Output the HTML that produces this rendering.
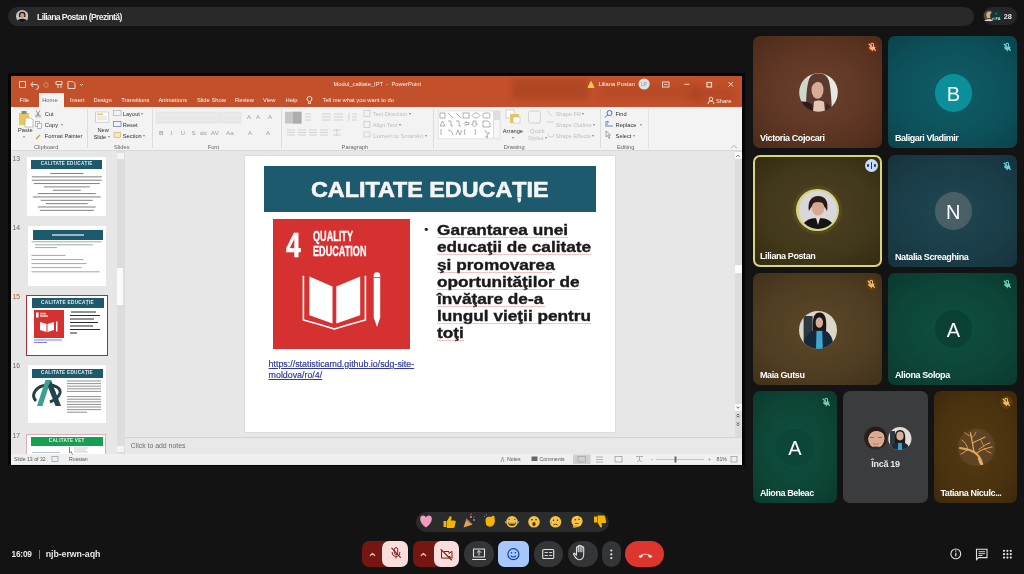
<!DOCTYPE html>
<html><head><meta charset="utf-8">
<style>
*{margin:0;padding:0;box-sizing:border-box}
html,body{width:1024px;height:574px;overflow:hidden;background:#131313;font-family:"Liberation Sans",sans-serif;position:relative}
body{filter:blur(0.35px)}
.a{position:absolute}
.t{position:absolute;white-space:nowrap;line-height:1}
/* top bar */
#pill{left:8px;top:7px;width:965px;height:20px;border-radius:10px;background:#2a2b2d}
#pill2{left:983px;top:7px;width:34px;height:18px;border-radius:9px;background:#232425}
/* ppt */
#frame{left:8px;top:73px;width:737px;height:393px;background:#000}
#ppt{left:10.5px;top:76px;width:731px;height:388px;background:#e6e6e6;overflow:hidden}
#title{left:0;top:0;width:731px;height:30px;background:#c55128}
#ribbon{left:0;top:30px;width:731px;height:44px;background:#f3f3f3;border-bottom:1px solid #d6d6d6}
#thumbs{left:0;top:75px;width:115px;height:303px;background:#e6e6e6}
#slide{left:234.5px;top:79.5px;width:370px;height:276.5px;background:#fff}
/* tiles */
.tile{position:absolute;border-radius:7px;overflow:hidden}
.name{position:absolute;left:7px;bottom:5.2px;color:#fff;font-size:9px;font-weight:bold;white-space:nowrap;line-height:1}
/* toolbar */
.btn{position:absolute;top:541px;height:26px;border-radius:13px;background:#333537}
</style></head><body>
<!-- top bar -->
<div class="a" style="left:7.5px;top:7.3px;width:966px;height:19.2px;border-radius:9.6px;background:#28292b"></div>
<svg class="a" style="left:15.7px;top:10.2px" width="12.4" height="12.4" viewBox="0 0 12.4 12.4"><defs><clipPath id="tpc"><circle cx="6.2" cy="6.2" r="6.2"/></clipPath></defs><g clip-path="url(#tpc)"><rect width="12.4" height="12.4" fill="#c9c0b8"/><path d="M3 7 C2.5 3 4 1.8 6.2 1.8 C8.6 1.8 10 3 9.4 7Z" fill="#2a1c18"/><ellipse cx="6.2" cy="5.6" rx="2.1" ry="2.5" fill="#c89a84"/><path d="M0.5 12.4 C1.5 9.5 3.5 8.8 6.2 8.8 C9 8.8 11 9.5 12 12.4Z" fill="#141414"/></g></svg>
<div class="t" style="left:37px;top:12.9px;font-size:8.6px;font-weight:bold;color:#ececec;letter-spacing:-0.6px">Liliana Postan (Prezintă)</div>
<div class="a" style="left:982.6px;top:6.8px;width:34.4px;height:18px;border-radius:9px;background:#252627"></div>
<svg class="a" style="left:983px;top:8px" width="20" height="16" viewBox="0 0 20 16">
 <circle cx="6.4" cy="7.8" r="5.6" fill="#5a4a3a"/><path d="M3.2 6.5 C3.5 2.5 9.5 2.5 9.6 6.5 L8.8 10 H4Z" fill="#c8b08a"/><path d="M1.2 13 C2.5 10.5 10.5 10.5 11.6 13Z" fill="#e0d8c8"/>
 <circle cx="13.2" cy="8" r="5.6" fill="#103836" stroke="#252627" stroke-width="0.8"/><path d="M12.4 5.8 h1.6" stroke="#8ab" stroke-width="0.7"/><text x="13.2" y="11.6" font-size="3.8" fill="#ddd" text-anchor="middle" font-family="Liberation Sans" font-weight="bold">ri FA</text>
</svg>
<div class="t" style="left:1003.8px;top:13px;font-size:7.2px;font-weight:bold;color:#e8e8e8">28</div>

<!-- ppt -->
<div class="a" style="left:8px;top:73px;width:737px;height:393px;background:#050505"></div>
<div class="a" style="left:10.5px;top:76px;width:731px;height:388.5px;background:#e7e7e7"></div>
<!-- title bar -->
<div class="a" style="left:10.5px;top:76px;width:731px;height:30.5px;background:#c2502a"></div>
<div class="a" style="left:512px;top:79px;width:76px;height:20px;background:rgba(90,25,5,0.16);filter:blur(2.5px)"></div>
<div class="a" style="left:600px;top:85px;width:100px;height:14px;background:rgba(90,25,5,0.1);filter:blur(3px)"></div>
<div class="a" style="left:690px;top:88px;width:45px;height:13px;background:rgba(90,25,5,0.12);filter:blur(3px)"></div>
<div class="a" style="left:39.3px;top:92.8px;width:25.2px;height:14px;background:#f3f3f3"></div>
<div id="ppttxt" style="color:#fff0e8;font-size:5.8px">
<div class="t" style="left:333.5px;top:82.2px">Modul_calitate_IPT&nbsp; - &nbsp;PowerPoint</div>
<div class="t" style="left:598.5px;top:82.2px">Liliana Postan</div>
<div class="t" style="left:19.6px;top:98.3px">File</div>
<div class="t" style="left:42.2px;top:98.3px;color:#6a6a6a">Home</div>
<div class="t" style="left:70px;top:98.3px">Insert</div>
<div class="t" style="left:93.6px;top:98.3px">Design</div>
<div class="t" style="left:121.3px;top:98.3px">Transitions</div>
<div class="t" style="left:158.4px;top:98.3px">Animations</div>
<div class="t" style="left:196.9px;top:98.3px">Slide Show</div>
<div class="t" style="left:235px;top:98.3px">Review</div>
<div class="t" style="left:263px;top:98.3px">View</div>
<div class="t" style="left:285.6px;top:98.3px">Help</div>
<div class="t" style="left:322.5px;top:98.3px">Tell me what you want to do</div>
<div class="t" style="left:716px;top:98.9px">Share</div>
</div>
<svg class="a" style="left:10.5px;top:76px" width="731" height="31" viewBox="0 0 731 31">
 <g fill="none" stroke="#f6d8ca" stroke-width="1">
  <rect x="8.5" y="5.5" width="6" height="6"/>
  <path d="M22 6 L20 8.5 L22 11 M20.5 8.5 H25 A2.5 2.5 0 0 1 25 13.5"/>
  <circle cx="35" cy="9" r="2.2" stroke="#d98a6c"/>
  <path d="M45 5.5 h6 v3 h-6z M47 9 v3 M50 9 v3"/>
  <path d="M57 5.5 h5 l2 2 v5 h-7z"/>
  <path d="M69 8 l1.5 1.5 l1.5 -1.5"/>
  <path d="M577 11.5 L580 5.5 L583 11.5Z" fill="#f2c94c" stroke="#f2c94c"/>
  <rect x="651.5" y="6" width="6.5" height="5"/><path d="M653 8.5 h3.5" stroke-width="0.8"/>
  <path d="M673.5 8.3 h5"/>
  <rect x="696" y="6.5" width="4.5" height="4.5" stroke-width="1.2"/>
  <path d="M717.5 6 l4.5 4.5 M722 6 l-4.5 4.5" stroke-width="1"/>
  <circle cx="298.5" cy="23" r="2.5"/><path d="M297.5 26 v1.5 h2 v-1.5"/>
  <circle cx="700" cy="23" r="1.8"/><path d="M697 28 a3 3 0 0 1 6 0"/>
 </g>
 <circle cx="633.1" cy="8" r="5.6" fill="#dde3ea"/>
 <text x="633.1" y="10" font-size="4.5" fill="#7a8ea0" text-anchor="middle" font-family="Liberation Sans">LP</text>
</svg>
<!-- ribbon -->
<div class="a" style="left:10.5px;top:106.6px;width:731px;height:44px;background:#f3f3f3;border-bottom:1px solid #dadada"></div>
<div style="color:#303030;font-size:5.7px">
 <div class="t" style="left:44.8px;top:112.3px">Cut</div>
 <div class="t" style="left:44.8px;top:123.3px">Copy&nbsp; <span style="font-size:4.2px;vertical-align:1px;color:#888">▾</span></div>
 <div class="t" style="left:44.8px;top:134.3px">Format Painter</div>
 <div class="t" style="left:18px;top:128.3px">Paste</div>
 <div class="t" style="left:22.5px;top:135.3px"><span style="font-size:4.2px;vertical-align:1px;color:#888">▾</span></div>
 <div class="t" style="left:34px;top:145.3px;color:#666">Clipboard</div>
 <div class="t" style="left:97.5px;top:127.6px">New</div>
 <div class="t" style="left:93.5px;top:134.8px">Slide <span style="font-size:4.2px;vertical-align:1px;color:#888">▾</span></div>
 <div class="t" style="left:122.8px;top:111.8px">Layout <span style="font-size:4.2px;vertical-align:1px;color:#888">▾</span></div>
 <div class="t" style="left:122.8px;top:122.8px">Reset</div>
 <div class="t" style="left:122.8px;top:133.8px">Section <span style="font-size:4.2px;vertical-align:1px;color:#888">▾</span></div>
 <div class="t" style="left:114px;top:145.3px;color:#666">Slides</div>
 <div class="t" style="left:207.7px;top:145.3px;color:#666">Font</div>
 <div class="t" style="left:341.6px;top:145.3px;color:#666">Paragraph</div>
 <div class="t" style="left:503.8px;top:145.3px;color:#666">Drawing</div>
 <div class="t" style="left:617px;top:145.3px;color:#666">Editing</div>
 <div class="t" style="left:502.8px;top:128.6px">Arrange</div>
 <div class="t" style="left:511.5px;top:135.8px"><span style="font-size:4.2px;vertical-align:1px;color:#888">▾</span></div>
 <div class="t" style="left:615.6px;top:111.6px">Find</div>
 <div class="t" style="left:615.6px;top:122.6px">Replace&nbsp; <span style="font-size:4.2px;vertical-align:1px;color:#888">▾</span></div>
 <div class="t" style="left:615.6px;top:133.6px">Select <span style="font-size:4.2px;vertical-align:1px;color:#888">▾</span></div>
 <div style="color:#bdbdbd">
  <div class="t" style="left:372.8px;top:111.6px">Text Direction <span style="font-size:4.2px;vertical-align:1px;color:#888">▾</span></div>
  <div class="t" style="left:372.8px;top:122.6px">Align Text <span style="font-size:4.2px;vertical-align:1px;color:#888">▾</span></div>
  <div class="t" style="left:372.8px;top:133.6px">Convert to SmartArt <span style="font-size:4.2px;vertical-align:1px;color:#888">▾</span></div>
  <div class="t" style="left:555.5px;top:111.6px">Shape Fill <span style="font-size:4.2px;vertical-align:1px;color:#888">▾</span></div>
  <div class="t" style="left:555.5px;top:122.6px">Shape Outline <span style="font-size:4.2px;vertical-align:1px;color:#888">▾</span></div>
  <div class="t" style="left:555.5px;top:133.6px">Shape Effects <span style="font-size:4.2px;vertical-align:1px;color:#888">▾</span></div>
  <div class="t" style="left:530px;top:128.6px">Quick</div>
  <div class="t" style="left:528px;top:135.8px">Styles <span style="font-size:4.2px;vertical-align:1px;color:#888">▾</span></div>
 </div>
</div>
<!-- separators -->
<div class="a" style="left:87px;top:109px;width:1px;height:39px;background:#dcdcdc"></div>
<div class="a" style="left:152.2px;top:109px;width:1px;height:39px;background:#dcdcdc"></div>
<div class="a" style="left:281px;top:109px;width:1px;height:39px;background:#dcdcdc"></div>
<div class="a" style="left:433.4px;top:109px;width:1px;height:39px;background:#dcdcdc"></div>
<div class="a" style="left:600.2px;top:109px;width:1px;height:39px;background:#dcdcdc"></div>
<div class="a" style="left:648px;top:109px;width:1px;height:39px;background:#e2e2e2"></div>
<!-- ribbon icons -->
<svg class="a" style="left:0;top:106px" width="742" height="45" viewBox="0 106 742 45">
 <path d="M19 113 h10 v12 h-10z" fill="#e8c65a"/><rect x="21.5" y="111" width="5" height="3" fill="#8a8a8a"/><path d="M25 118 h6 l2 2 v7 h-8z" fill="#fff" stroke="#9a9a9a" stroke-width="0.6"/>
 <path d="M36 110.5 l3 5 M40 110.5 l-3 5" stroke="#7a7a7a" stroke-width="0.8"/><circle cx="36.5" cy="116" r="1" fill="none" stroke="#7a7a7a" stroke-width="0.6"/><circle cx="39.5" cy="116" r="1" fill="none" stroke="#7a7a7a" stroke-width="0.6"/>
 <rect x="35.5" y="121.5" width="4" height="5" fill="none" stroke="#7d93b0" stroke-width="0.6"/><rect x="37.5" y="123.5" width="4" height="5" fill="#fff" stroke="#7d93b0" stroke-width="0.6"/>
 <path d="M36 139 l4 -4" stroke="#c9a040" stroke-width="1.2"/>
 <rect x="95.6" y="112" width="13.2" height="10.2" fill="#fff" stroke="#b8b8b8" stroke-width="0.6"/><rect x="97" y="113.5" width="6" height="1.5" fill="#e8c65a"/><rect x="97" y="116" width="10" height="4.5" fill="#eaeaea"/>
 <rect x="113.5" y="110.5" width="7.5" height="5" fill="none" stroke="#9aa8b8" stroke-width="0.6"/>
 <rect x="113.5" y="121.5" width="7.5" height="5" fill="none" stroke="#5b7da8" stroke-width="0.7"/>
 <rect x="114" y="132.5" width="6.5" height="5" fill="#f4e8c8" stroke="#d0a860" stroke-width="0.6"/>
 <rect x="156" y="112" width="64" height="11" fill="#e9e9e9" stroke="#dedede" stroke-width="0.5"/>
 <rect x="221" y="112" width="20" height="11" fill="#e9e9e9" stroke="#dedede" stroke-width="0.5"/>
 <g fill="#a0a0a0" font-family="Liberation Sans" font-size="6.2">
  <text x="159" y="135" font-weight="bold">B</text><text x="170.5" y="135" font-style="italic">I</text><text x="180.5" y="135">U</text><text x="191.5" y="135">S</text><text x="200" y="135" font-size="4.5">abc</text><text x="211" y="135">AV</text><text x="226" y="135">Aa</text><text x="247" y="119">A</text><text x="256" y="119">A</text><text x="268" y="119">A</text><text x="248" y="135">A</text><text x="266" y="135">A</text>
 </g>
 <rect x="285" y="111.8" width="16.5" height="11.7" fill="#c6c6c6"/><rect x="293" y="111.8" width="8.5" height="11.7" fill="#adadad"/>
 <g stroke="#c4c4c4" stroke-width="0.7" fill="none">
  <path d="M305 114 h6 M305 117 h6 M305 120 h6"/><path d="M322 114 h9 M322 117 h9 M322 120 h9"/><path d="M334 114 h9 M334 117 h9 M334 120 h9"/><path d="M349 113 v8 M352 114 h5 M352 117 h5 M352 120 h5"/>
  <path d="M287 130 h8 M287 132.5 h8 M287 135 h8"/><path d="M298 130 h8 M298 132.5 h8 M298 135 h8"/><path d="M309 130 h8 M309 132.5 h8 M309 135 h8"/><path d="M320 130 h8 M320 132.5 h8 M320 135 h8"/><path d="M333 130 h8 M333 135 h8 M337 129 v7"/>
  <rect x="364" y="110.5" width="6" height="6"/><rect x="364" y="121.5" width="6" height="6"/><path d="M364 132 h6 v5 h-6z"/>
  <rect x="528.5" y="111" width="12" height="12" rx="2"/>
  <path d="M547 111 l5 5 M547 122 h7 M548 134 a3 3 0 1 0 6 0"/>
 </g>
 <rect x="438.2" y="111" width="55.4" height="27.8" fill="#fff" stroke="#d6d6d6" stroke-width="0.6"/>
 <rect x="493.6" y="111" width="6.5" height="27.8" fill="#f6f6f6" stroke="#d6d6d6" stroke-width="0.6"/>
 <rect x="493.6" y="111" width="6.5" height="9" fill="#dedede"/>
 <g stroke="#707070" stroke-width="0.55" fill="none">
  <rect x="440" y="113" width="5" height="5"/><path d="M448 113 l5 5 M456 113 l5 5"/><rect x="463" y="113" width="6" height="5"/><path d="M472 115.5 l2.5 -2.5 h3 l2.5 2.5 l-2.5 2.5 h-3z"/><rect x="483" y="113" width="7" height="5" rx="1.5"/>
  <path d="M440 126 l2.5 -5 l2.5 5z M448 121 h3 v5 h2 M456 121 h3 v5 h2 M464 123.5 l2 -2 v1 h3 v2 h-3 v1z M473 121 h3 v3 h1.5 l-3 3 l-3 -3 h1.5z M483 121 h5 l2 2 v4 h-7z"/>
  <path d="M441 129 v6 M448 130 q4 0 5 5 M456 135 l2 -5 l2 5 l2 -5 M465 129 q-1.5 3 0 6 M475 129 q1.5 3 0 6 M485 130 l1.5 3 h3 l-2.5 2 l1 3 l-3 -2"/>
 </g>
 <rect x="506" y="110" width="8" height="8" fill="#fff" stroke="#aaa" stroke-width="0.5"/><rect x="510" y="114" width="9" height="9" fill="#e8c65a"/><rect x="513" y="117" width="7" height="6" fill="#fff" stroke="#aaa" stroke-width="0.5"/>
 <circle cx="609.5" cy="113" r="2.5" fill="none" stroke="#2b6cb8" stroke-width="0.9"/><path d="M607.5 115 l-2.5 2.5" stroke="#2b6cb8" stroke-width="1"/>
 <path d="M605 122 h4 M608 122 l-1 -1 M605 126 h8 M605 124 h3" stroke="#2b6cb8" stroke-width="0.8"/>
 <path d="M606 131 v6 l1.5 -1.5 l1.5 3 l1 -0.5 l-1.5 -3 h2z" fill="none" stroke="#777" stroke-width="0.6"/>
 <path d="M731 148 l3 -2.5 l3 2.5" fill="none" stroke="#999" stroke-width="0.7"/>
</svg>
<!-- left thumbnail pane -->
<div class="a" style="left:10.5px;top:151px;width:106px;height:303px;background:#e7e7e7"></div>
<div class="a" style="left:116.5px;top:151px;width:8.5px;height:303px;background:#dddddd"></div>
<div class="a" style="left:117.3px;top:153px;width:6.5px;height:6px;background:#f4f4f4"></div>
<div class="a" style="left:117.3px;top:267.6px;width:5.4px;height:37.5px;background:#fbfbfb"></div>
<div class="a" style="left:117.3px;top:446px;width:6.5px;height:6px;background:#f4f4f4"></div>
<div class="a" style="left:125.3px;top:151px;width:616px;height:285.5px;background:#e7e7e7"></div>
<div class="a" style="left:735px;top:151px;width:6.6px;height:286px;background:#dcdcdc"></div>
<div class="a" style="left:734.5px;top:152px;width:7px;height:7px;background:#f8f8f8"></div>
<div class="a" style="left:734.5px;top:265.2px;width:7px;height:7.8px;background:#fcfcfc"></div>
<div class="a" style="left:734.5px;top:404px;width:7px;height:7px;background:#fbfbfb"></div>
<svg class="a" style="left:734px;top:150px" width="8" height="290" viewBox="734 150 8 290"><path d="M736 157 l2 -2 l2 2" fill="none" stroke="#666" stroke-width="0.8"/><path d="M736.5 407 l1.5 1.2 l1.5 -1.2" fill="none" stroke="#555" stroke-width="0.9"/><path d="M736.6 415.3 l1.4 -1.2 l1.4 1.2 M736.6 417.3 l1.4 -1.2 l1.4 1.2 M736.6 422.5 l1.4 1.2 l1.4 -1.2 M736.6 424.5 l1.4 1.2 l1.4 -1.2" fill="none" stroke="#555" stroke-width="0.9"/></svg>
<!-- notes -->
<div class="a" style="left:125.3px;top:437px;width:616px;height:17.5px;background:#e8e8e8;border-top:1px solid #d4d4d4"></div>
<div class="t" style="left:130.7px;top:443.0px;font-size:6.9px;color:#6e6e6e">Click to add notes</div>
<!-- status bar -->
<div class="a" style="left:10.5px;top:454.3px;width:731px;height:10px;background:#f0f0f0"></div>
<div style="color:#555;font-size:5.2px">
 <div class="t" style="left:14px;top:456.8px">Slide 13 of 32</div>
 <div class="t" style="left:69px;top:456.8px">Russian</div>
 <div class="t" style="left:507px;top:456.8px">Notes</div>
 <div class="t" style="left:539.5px;top:456.8px">Comments</div>
 <div class="t" style="left:716.5px;top:456.8px">81%</div>
</div>
<svg class="a" style="left:0;top:454px" width="742" height="11" viewBox="0 454 742 11">
 <rect x="52" y="456.5" width="6" height="5" fill="none" stroke="#888" stroke-width="0.6"/>
 <path d="M501 462 l1.5 -5 l1.5 5" fill="none" stroke="#777" stroke-width="0.6"/>
 <rect x="531.5" y="456.5" width="6" height="4.5" fill="#666"/>
 <rect x="573" y="454.5" width="17.5" height="9.5" fill="#cfcfcf"/>
 <rect x="578" y="456.5" width="7.5" height="5.5" fill="none" stroke="#999" stroke-width="0.6"/>
 <path d="M596 457 h7 M596 459.5 h7 M596 462 h7" stroke="#888" stroke-width="0.6"/>
 <rect x="615" y="456.5" width="7" height="5.5" fill="none" stroke="#888" stroke-width="0.6"/>
 <path d="M636 456.5 h7 M639.5 456.5 v4 M637 462 l2.5 -2 l2.5 2" fill="none" stroke="#888" stroke-width="0.6"/>
 <path d="M651 459.5 h2 M656 459.5 h48 M708 459.5 h3 M709.5 458 v3" stroke="#999" stroke-width="0.5"/>
 <rect x="674.5" y="456.5" width="2" height="6" fill="#666"/>
 <rect x="731" y="456.5" width="6" height="5.5" fill="none" stroke="#888" stroke-width="0.6"/>
</svg>
<!-- slide -->
<div class="a" style="left:245px;top:155.5px;width:369.5px;height:276.5px;background:#fff;box-shadow:0 0 1.5px rgba(0,0,0,0.18)"></div>
<div class="a" style="left:264px;top:165.8px;width:332.4px;height:45.8px;background:#1e5a6e"></div>
<div class="t" style="left:311.3px;top:178.9px;font-size:22px;font-weight:bold;color:#f4f6f6;-webkit-text-stroke:0.6px #f4f6f6;transform:scaleX(1.06);transform-origin:0 0">CALITATE EDUCAȚIE</div>
<div class="a" style="left:273px;top:219.3px;width:137.2px;height:129.4px;background:#d53131"></div>
<div class="t" style="left:286.2px;top:227.6px;font-size:35.7px;font-weight:bold;color:#fff;-webkit-text-stroke:0.6px #fff;transform:scaleX(0.74);transform-origin:0 0;line-height:1">4</div>
<div class="t" style="left:312.6px;top:229.3px;font-size:14.7px;font-weight:bold;color:#fff;-webkit-text-stroke:0.3px #fff;transform:scaleX(0.62);transform-origin:0 0;line-height:14.4px">QUALITY<br>EDUCATION</div>
<svg class="a" style="left:273px;top:219px" width="138" height="130" viewBox="273 219 138 130">
 <path d="M303.4 275.8 V319.9 Q319 324 334.4 329 Q350 324 365.4 319.9 V275.8" fill="none" stroke="#fff" stroke-width="1.6"/>
 <path d="M309.4 276.5 L332.5 286.5 V323.5 L309.4 315.2Z" fill="#fff"/>
 <path d="M336.3 286.5 L360.2 276.5 V315.2 L336.3 323.5Z" fill="#fff"/>
 <path d="M373.7 275.5 A3.25 3.25 0 0 1 380.2 275.5 V317.5 L377 327.1 L373.7 317.5Z" fill="#fff"/>
 <path d="M373.7 277.6 H380.2" stroke="#d53131" stroke-width="0.9"/>
</svg>
<div class="t" style="left:424.2px;top:224px;font-size:11.5px;font-weight:bold;color:#222">•</div>
<div class="a" style="left:437.3px;top:222.2px;font-size:14px;font-weight:bold;color:#1a1a1a;-webkit-text-stroke:0.35px #1a1a1a;line-height:17.2px;white-space:nowrap;transform:scaleX(1.23);transform-origin:0 0">Garantarea unei<br>educaţii de calitate<br>şi promovarea<br>oportunităţilor de<br>învăţare de-a<br>lungul vieţii pentru<br>toţi</div>
<div class="a" style="left:437.3px;top:237.1px;width:131px;height:0.8px;background:rgba(220,90,90,0.35)"></div>
<div class="a" style="left:437.3px;top:254.3px;width:154px;height:0.8px;background:rgba(220,90,90,0.35)"></div>
<div class="a" style="left:437.3px;top:271.5px;width:115px;height:0.8px;background:rgba(220,90,90,0.35)"></div>
<div class="a" style="left:437.3px;top:288.7px;width:143px;height:0.8px;background:rgba(220,90,90,0.35)"></div>
<div class="a" style="left:437.3px;top:305.9px;width:108px;height:0.8px;background:rgba(220,90,90,0.35)"></div>
<div class="a" style="left:437.3px;top:323.1px;width:154px;height:0.8px;background:rgba(220,90,90,0.35)"></div>
<div class="a" style="left:437.3px;top:340.3px;width:27px;height:0.8px;background:rgba(220,90,90,0.35)"></div>
<div class="a" style="left:268.6px;top:359px;font-size:8.85px;color:#2f3aa6;-webkit-text-stroke:0.2px #2f3aa6;line-height:10.9px;white-space:nowrap;text-decoration:underline">https://statisticamd.github.io/sdg-site-<br>moldova/ro/4/</div>

<!-- thumbnails -->
<div style="color:#6a6a6a;font-size:6.8px">
 <div class="t" style="left:12.5px;top:155.5px">13</div>
 <div class="t" style="left:12.5px;top:224.8px">14</div>
 <div class="t" style="left:12.5px;top:294.1px;color:#c65a36">15</div>
 <div class="t" style="left:12.5px;top:363.4px">16</div>
 <div class="t" style="left:12.5px;top:432.7px">17</div>
</div>
<!-- t13 -->
<div class="a" style="left:27.4px;top:157px;width:78.8px;height:59.3px;background:#fff"></div>
<div class="a" style="left:31px;top:159.5px;width:71.4px;height:9.5px;background:#1e5a6e"></div>
<div class="t" style="left:31px;width:71.4px;top:161.8px;font-size:4.6px;font-weight:bold;color:#dfe9ec;text-align:center;letter-spacing:0.3px">CALITATE EDUCAȚIE</div>
<svg class="a" style="left:27px;top:157px" width="80" height="60" viewBox="27 157 80 60"><path d="M50.3 173.50 h33M31.8 176.85 h70M31.8 180.20 h70M33.8 183.55 h66M43.8 186.90 h46M52.8 190.25 h28M37.8 193.60 h58M32.8 196.95 h68M40.8 200.30 h52M45.8 203.65 h42M37.8 207.00 h58M39.8 210.35 h54" stroke="#2a2a2a" stroke-width="0.85" opacity="0.7"/></svg>
<!-- t14 -->
<div class="a" style="left:27.6px;top:226.3px;width:78.5px;height:59.3px;background:#fff"></div>
<div class="a" style="left:33px;top:230px;width:70px;height:10px;background:#1e5a6e"></div>
<div class="a" style="left:52px;top:234.3px;width:32px;height:1.4px;background:#9ab8c2"></div>
<svg class="a" style="left:27px;top:226px" width="80" height="60" viewBox="27 226 80 60"><path d="M31.5 241.8 h70M35 244.8 h58M35 247.6 h22M31.5 255.4 h34M31.5 259.6 h52M31.5 263.6 h55M31.5 267.6 h50M31.5 271.8 h68" stroke="#6a6a6a" stroke-width="0.8" opacity="0.75"/></svg>
<!-- t15 -->
<div class="a" style="left:26px;top:294.6px;width:81.6px;height:61px;border:1px solid #a03434;background:#fff"></div>
<div class="a" style="left:31.5px;top:298px;width:72px;height:9.8px;background:#1e5a6e"></div>
<div class="t" style="left:31.5px;width:72px;top:300.5px;font-size:4.7px;font-weight:bold;color:#e6eef0;text-align:center;letter-spacing:0.3px">CALITATE EDUCAȚIE</div>
<div class="a" style="left:33.5px;top:309.6px;width:30px;height:28.2px;background:#d53131"></div>
<svg class="a" style="left:33px;top:309px" width="31" height="29" viewBox="33 309 31 29"><rect x="36" y="312.5" width="2.6" height="5" fill="#fff"/><rect x="40" y="312.8" width="6" height="1.6" fill="#f6c8c8"/><rect x="40" y="315.2" width="8" height="1.6" fill="#f6c8c8"/><path d="M40 322 L46.5 324 V332 L40 330Z M47.5 324 L54 322 V330 L47.5 332Z" fill="#fff"/><rect x="56" y="321.5" width="1.5" height="10" fill="#fff"/></svg>
<svg class="a" style="left:26px;top:294px" width="82" height="62" viewBox="26 294 82 62"><g stroke="#2a2a2a" stroke-width="1.1">
<path d="M71 312 h25 M70 315.5 h30 M70 319 h24 M70 322.5 h28 M70 326 h23 M70 329.5 h30 M70 333 h7"/></g>
<path d="M34 340 h28 M34 342.5 h13" stroke="#5a5adf" stroke-width="0.8"/></svg>
<!-- t16 -->
<div class="a" style="left:27.6px;top:365px;width:78.4px;height:58.4px;background:#fff"></div>
<div class="a" style="left:31.5px;top:368.5px;width:71px;height:9.5px;background:#1e5a6e"></div>
<div class="t" style="left:31.5px;width:71px;top:370.8px;font-size:4.6px;font-weight:bold;color:#e6eef0;text-align:center;letter-spacing:0.3px">CALITATE EDUCAȚIE</div>
<svg class="a" style="left:27px;top:365px" width="80" height="60" viewBox="27 365 80 60">
<path d="M36 401 C30 395 36 386 47 385 C55 384.5 61 388 60 393 C59 397 55 400 50 402" fill="none" stroke="#253d44" stroke-width="3"/>
<path d="M37 406 L45.5 380 L51 380 L46 395 L42.5 406Z" fill="#3aa092"/><path d="M51 380 L61 406 L55.5 406 L48 387Z" fill="#22454c"/>
<path d="M67 381.0 h34M67 383.6 h34M67 386.2 h34M67 388.8 h34M67 391.4 h34M67 396.6 h34M67 399.2 h34M67 401.8 h34M67 404.4 h34M67 407.0 h34M67 409.6 h34M67 412.2 h20" stroke="#666" stroke-width="0.9" opacity="0.8"/></svg>
<!-- t17 -->
<div class="a" style="left:26.4px;top:434.2px;width:80px;height:20px;background:#fff;border:0.8px solid #d9b0b4;border-bottom:none"></div>
<div class="a" style="left:31px;top:436.6px;width:71.5px;height:9.6px;background:#14a050"></div>
<div class="t" style="left:31px;width:71.5px;top:439px;font-size:4.6px;font-weight:bold;color:#e6f4ea;text-align:center;letter-spacing:0.3px">CALITATE VET</div>
<div class="a" style="left:32px;top:451.5px;width:28px;height:1.2px;background:#b8c8dc"></div>
<svg class="a" style="left:60px;top:446px" width="30" height="9" viewBox="60 446 30 9"><path d="M69.5 447 v6 l1.5 -1.5 l1.5 3" fill="none" stroke="#555" stroke-width="0.7"/><g stroke="#999" stroke-width="0.5"><path d="M74 448 h14 M74 450 h12 M74 452 h14"/></g></svg>

<!-- tiles -->
<div class="tile" style="left:753px;top:36px;width:129px;height:112px;background:radial-gradient(ellipse 75% 70% at 50% 50%,#6c412c 0%,#5c3522 60%,#4a2a1a 100%)">
  <svg class="a" style="left:45.5px;top:37px" width="39" height="39" viewBox="0 0 39 39"><defs><clipPath id="c1"><circle cx="19.5" cy="19.5" r="19.3"/></clipPath><filter id="bl1" x="-10%" y="-10%" width="120%" height="120%"><feGaussianBlur stdDeviation="0.7"/></filter></defs><g clip-path="url(#c1)"><g filter="url(#bl1)"><rect width="39" height="39" fill="#e6e9e2"/><rect x="0" y="0" width="9" height="30" fill="#cfd8cc"/><path d="M7 39 C7 26 7.5 14 10 6 C12 1 16 0 19.5 0.5 C24 0.5 28 2 30 8 C32 16 32.5 28 33 39Z" fill="#5b3b2e"/><ellipse cx="18.5" cy="17" rx="6" ry="8.8" fill="#d7ab98"/><path d="M12 14 C13 7 17 5 20 5 C24 5 26 8 26 14 C24 10 22 9 19 9 C16 9 14 11 12 14Z" fill="#5b3b2e"/><path d="M0 39 V29 C5 28 9 29 13 31 L14.5 39Z" fill="#2a1d1c"/><path d="M14 39 L15 28.5 C18 27 22 27 25 29 L26 39Z" fill="#e4c6b6"/><path d="M26 39 L27 30 C30 31 32 33 33 39Z" fill="#3c2620"/></g></g></svg>
  <div class="a" style="left:112px;top:4.5px;width:13.5px;height:13.5px;border-radius:50%;background:#6e2b14"></div>
  <svg class="a" style="left:113.5px;top:6px" width="10.5" height="10.5" viewBox="0 0 24 24"><path d="M12 3a3 3 0 0 0-3 3v6a3 3 0 0 0 6 0V6a3 3 0 0 0-3-3z M6 11a6 6 0 0 0 12 0 M12 17v4" stroke="#f2b99a" stroke-width="2.4" fill="none"/><path d="M4 4 L20 20" stroke="#f2b99a" stroke-width="2.6"/></svg>
  <div class="name" style="letter-spacing:-0.4px">Victoria Cojocari</div>
</div>
<div class="tile" style="left:888px;top:36px;width:129px;height:112px;background:radial-gradient(ellipse 75% 70% at 50% 50%,#0f5d66 0%,#0d515a 60%,#0a424b 100%)">
  <div class="a" style="left:46.5px;top:38px;width:37.6px;height:37.6px;border-radius:50%;background:#0b8f9a;color:#fff;font-size:20px;line-height:40px;text-align:center">B</div>
  <svg class="a" style="left:113.5px;top:5.5px" width="10.5" height="10.5" viewBox="0 0 24 24"><path d="M12 3a3 3 0 0 0-3 3v6a3 3 0 0 0 6 0V6a3 3 0 0 0-3-3z M6 11a6 6 0 0 0 12 0 M12 17v4" stroke="#6fd3dc" stroke-width="2.4" fill="none"/><path d="M4 4 L20 20" stroke="#6fd3dc" stroke-width="2.6"/></svg>
  <div class="name" style="letter-spacing:-0.45px">Baligari Vladimir</div>
</div>
<div class="tile" style="left:753px;top:155px;width:129px;height:112px;background:radial-gradient(ellipse 75% 70% at 50% 50%,#4d4222 0%,#413719 60%,#332b12 100%);border:2.2px solid #d9d47e">
  <div class="a" style="left:38.2px;top:28.6px;width:48.8px;height:48.8px;border-radius:50%;background:#544a1e"></div>
  <div class="a" style="left:41.3px;top:31.7px;width:42.6px;height:42.6px;border-radius:50%;background:#d6d488"></div>
  <svg class="a" style="left:43.6px;top:34px" width="38" height="38" viewBox="0 0 38 38"><defs><clipPath id="c3"><circle cx="19" cy="19" r="19"/></clipPath></defs><g clip-path="url(#c3)"><rect width="38" height="38" fill="#d9d7da"/><path d="M10 20 C8 10 13 5 19 5 C26 5 30 10 28 20 C26 16 24 13 19 13 C14 13 12 16 10 20Z" fill="#2a1c18"/><ellipse cx="19" cy="17" rx="6.3" ry="7.5" fill="#d6a890"/><path d="M10 20 C9 12 13 8 19 8 C25 8 29 12 28 20 C27 14 24 11 19 11 C14 11 11 14 10 20Z" fill="#2a1c18"/><path d="M2 38 C4 30 10 27 19 27 C28 27 34 30 36 38Z" fill="#161314"/><path d="M17 27 L19 34 L21 27Z" fill="#e8e0dc"/></g></svg>
  <div class="a" style="left:109.8px;top:1.8px;width:13.4px;height:13.4px;border-radius:50%;background:#c8dcf8"></div>
  <div class="a" style="left:112.1px;top:6.8px;width:1.9px;height:3.4px;background:#0a3a8a;border-radius:1px"></div>
  <div class="a" style="left:115.6px;top:5px;width:1.9px;height:7px;background:#0a3a8a;border-radius:1px"></div>
  <div class="a" style="left:119.1px;top:6.8px;width:1.9px;height:3.4px;background:#0a3a8a;border-radius:1px"></div>
  <div class="name" style="left:5px;bottom:4.5px;letter-spacing:-0.4px">Liliana Postan</div>
</div>
<div class="tile" style="left:888px;top:155px;width:129px;height:112px;background:radial-gradient(ellipse 75% 70% at 50% 50%,#1f4753 0%,#1a3d48 60%,#15313b 100%)">
  <div class="a" style="left:46.5px;top:37px;width:37.6px;height:37.6px;border-radius:50%;background:#4a5e66;color:#fff;font-size:20px;line-height:40px;text-align:center">N</div>
  <svg class="a" style="left:113.5px;top:5.5px" width="10.5" height="10.5" viewBox="0 0 24 24"><path d="M12 3a3 3 0 0 0-3 3v6a3 3 0 0 0 6 0V6a3 3 0 0 0-3-3z M6 11a6 6 0 0 0 12 0 M12 17v4" stroke="#6fd3dc" stroke-width="2.4" fill="none"/><path d="M4 4 L20 20" stroke="#6fd3dc" stroke-width="2.6"/></svg>
  <div class="name" style="letter-spacing:-0.4px">Natalia Screaghina</div>
</div>
<div class="tile" style="left:753px;top:273px;width:129px;height:112px;background:radial-gradient(ellipse 75% 70% at 50% 50%,#5c4829 0%,#4f3d22 60%,#3e3019 100%)">
  <svg class="a" style="left:46px;top:38px" width="38" height="38" viewBox="0 0 38 38"><defs><clipPath id="c5"><circle cx="19" cy="19" r="19"/></clipPath></defs><g clip-path="url(#c5)"><rect width="38" height="38" fill="#ddd6c8"/><path d="M4.6 5 h9 v26 h-9z" fill="#2c3a40"/><path d="M14 20 C13 7 15 1.6 20.5 1.6 C26 1.6 28 7 27 20Z" fill="#1c1616"/><ellipse cx="20.3" cy="11.5" rx="3.7" ry="5.3" fill="#d6ac94"/><path d="M15.5 9 C16 4 18 3.5 20.5 3.5 C23 3.5 25 4 25.5 9 C24 6.5 22 6 20.5 6 C19 6 17 6.5 15.5 9Z" fill="#1c1616"/><path d="M4 38 C5 25 10 18.5 20 18.5 C30 18.5 34 25 35 38Z" fill="#17283a"/><path d="M17.5 20 L23.2 20 L23.8 38 L17 38Z" fill="#3fa6d0"/></g></svg>
  <div class="a" style="left:112px;top:5px;width:13px;height:13px;border-radius:50%;background:#5a3a10"></div>
  <svg class="a" style="left:113.3px;top:6.3px" width="10.5" height="10.5" viewBox="0 0 24 24"><path d="M12 3a3 3 0 0 0-3 3v6a3 3 0 0 0 6 0V6a3 3 0 0 0-3-3z M6 11a6 6 0 0 0 12 0 M12 17v4" stroke="#efc070" stroke-width="2.4" fill="none"/><path d="M4 4 L20 20" stroke="#efc070" stroke-width="2.6"/></svg>
  <div class="name" style="letter-spacing:-0.4px">Maia Gutsu</div>
</div>
<div class="tile" style="left:888px;top:273px;width:129px;height:112px;background:radial-gradient(ellipse 75% 70% at 50% 50%,#0f5041 0%,#0d4538 60%,#0a382d 100%)">
  <div class="a" style="left:46.5px;top:37px;width:37.6px;height:37.6px;border-radius:50%;background:#0a4134;color:#fff;font-size:20px;line-height:40px;text-align:center">A</div>
  <svg class="a" style="left:113.5px;top:5.5px" width="10.5" height="10.5" viewBox="0 0 24 24"><path d="M12 3a3 3 0 0 0-3 3v6a3 3 0 0 0 6 0V6a3 3 0 0 0-3-3z M6 11a6 6 0 0 0 12 0 M12 17v4" stroke="#73d3b0" stroke-width="2.4" fill="none"/><path d="M4 4 L20 20" stroke="#73d3b0" stroke-width="2.6"/></svg>
  <div class="name" style="letter-spacing:-0.4px">Aliona Solopa</div>
</div>
<div class="tile" style="left:753px;top:391px;width:84px;height:112px;background:radial-gradient(ellipse 75% 70% at 50% 50%,#0f5040 0%,#0d4536 60%,#0a382c 100%)">
  <div class="a" style="left:23.4px;top:37.9px;width:37.2px;height:37.2px;border-radius:50%;background:#0b4638;color:#fff;font-size:20px;line-height:39.6px;text-align:center">A</div>
  <svg class="a" style="left:67.8px;top:5.6px" width="10.5" height="10.5" viewBox="0 0 24 24"><path d="M12 3a3 3 0 0 0-3 3v6a3 3 0 0 0 6 0V6a3 3 0 0 0-3-3z M6 11a6 6 0 0 0 12 0 M12 17v4" stroke="#73d3b0" stroke-width="2.4" fill="none"/><path d="M4 4 L20 20" stroke="#73d3b0" stroke-width="2.6"/></svg>
  <div class="name" style="letter-spacing:-0.4px">Aliona Beleac</div>
</div>
<div class="tile" style="left:843px;top:391px;width:85px;height:112px;background:#3b3c3e">
  <svg class="a" style="left:20.6px;top:34.5px" width="48" height="24" viewBox="0 0 48 24"><defs><clipPath id="c8a"><circle cx="11.6" cy="12" r="11.6"/></clipPath><clipPath id="c8b"><circle cx="35.9" cy="12.6" r="11.6"/></clipPath></defs><g clip-path="url(#c8a)"><rect width="24" height="24" fill="#2e2220"/><ellipse cx="12.3" cy="12.5" rx="8.2" ry="9.5" fill="#d9aa92"/><path d="M2 16 C1 4 7 1 12 1 C18 1 22 4 22 12 C20 7 17 5 12 5 C7 5 4 9 3.5 16Z" fill="#2a1a16"/><path d="M6 11.5 h4 M14 11.5 h4" stroke="#9a6a50" stroke-width="1.1"/><path d="M9 17.5 q3 1.5 6 0" stroke="#b07a66" stroke-width="0.9" fill="none"/><path d="M3 24 C6 21 9 20.5 12 20.5 C15 20.5 18 21 21 24Z" fill="#2a2c38"/></g><g clip-path="url(#c8b)"><rect x="24" width="24" height="25" fill="#e2ddd6"/><rect x="26" y="5" width="5" height="20" fill="#2c3a40"/><path d="M31 17 C30 7 32 4 36 4 C40 4 42 7 41 17Z" fill="#1e1818"/><ellipse cx="36" cy="10" rx="3.6" ry="4.4" fill="#d8ae96"/><path d="M26 25 C27 18 31 16 36 16 C41 16 45 18 46 25Z" fill="#18293a"/><path d="M34.2 17 L37.8 17 L38.3 25 L33.7 25Z" fill="#3aa0c8"/></g></svg>
  <div class="t" style="left:0;width:85px;top:68.6px;text-align:center;color:#e8e8e8;font-size:9px;font-weight:bold;letter-spacing:-0.3px">Încă 19</div>
</div>
<div class="tile" style="left:934px;top:391px;width:83px;height:112px;background:radial-gradient(ellipse 75% 70% at 50% 50%,#553a12 0%,#4a320f 60%,#3c280b 100%)">
  <svg class="a" style="left:22.5px;top:37.3px" width="39" height="39" viewBox="0 0 39 39"><circle cx="19.5" cy="19.5" r="18.8" fill="#5e4424"/>
<g stroke="#d9a55a" fill="none" stroke-linecap="round">
<path d="M25 36 C24 31 22 27 17 24 C12 21 8 21 3 20" stroke-width="2.2"/>
<path d="M17 24 C16 18 15 12 13.5 5" stroke-width="1.3"/>
<path d="M15.5 15 C19 13 24 11 28 9" stroke-width="1.1"/>
<path d="M20 25 C24 22 29 20 35 19" stroke-width="1.2"/>
<path d="M22 21.5 C26 18 29 16 33 15" stroke-width="1"/>
<path d="M10 22 C8 24 6 25 4 26" stroke-width="1"/>
<path d="M11 22 C10 17 8 14 5 12" stroke-width="0.9"/>
<path d="M13.8 8 C11 7 9 6 7.5 4.5" stroke-width="0.8"/>
<path d="M14.5 10 C17 8 18.5 6 19 4" stroke-width="0.8"/>
<path d="M27 20 C29 23 31 24 34 25" stroke-width="0.9"/>
<path d="M24 12 C25 15 26 17 27 18" stroke-width="0.8"/>
</g><path d="M22 30 L26.5 36.5 L23 36.8 L20.5 30Z" fill="#e2b070"/></svg>
  <div class="a" style="left:65.5px;top:4.5px;width:13px;height:13px;border-radius:50%;background:#5c3a0c"></div>
  <svg class="a" style="left:66.8px;top:5.8px" width="10.5" height="10.5" viewBox="0 0 24 24"><path d="M12 3a3 3 0 0 0-3 3v6a3 3 0 0 0 6 0V6a3 3 0 0 0-3-3z M6 11a6 6 0 0 0 12 0 M12 17v4" stroke="#efc070" stroke-width="2.4" fill="none"/><path d="M4 4 L20 20" stroke="#efc070" stroke-width="2.6"/></svg>
  <div class="name" style="left:6.4px;letter-spacing:-0.4px">Tatiana Niculc...</div>
</div>

<!-- bottom bar -->
<div class="t" style="left:11.5px;top:549.8px;font-size:8.3px;font-weight:bold;color:#e6e6e6;letter-spacing:-0.2px">16:09</div>
<div class="a" style="left:38.7px;top:549.5px;width:0.9px;height:9px;background:#7a7a7a"></div>
<div class="t" style="left:45.7px;top:549.8px;font-size:8.8px;font-weight:bold;color:#e6e6e6;letter-spacing:-0.05px">njb-erwn-aqh</div>
<!-- reactions -->
<div class="a" style="left:416.3px;top:512.2px;width:192.7px;height:19.8px;border-radius:10px;background:#2a2b2d"></div>
<svg class="a" style="left:416px;top:512px" width="194" height="20" viewBox="416 512 194 20">
 <path d="M426 527.5 C418 522 419.5 515.5 423 515.5 C424.8 515.5 425.7 516.6 426 517.4 C426.3 516.6 427.2 515.5 429 515.5 C432.5 515.5 434 522 426 527.5Z" fill="#f29ac0"/><path d="M422 518 q1.5 -1.5 3 0" stroke="#fbd" stroke-width="0.8" fill="none"/>
 <path d="M443.5 521 h3 v6 h-3z" fill="#f4b400"/><path d="M447 521 l3 -5 c1.2 0 1.8 0.8 1.5 2 l-0.6 2.5 h3.5 c1 0 1.5 0.8 1.3 1.6 l-1.2 5 c-0.2 0.6 -0.7 0.9 -1.3 0.9 h-6.2z" fill="#f4b400"/>
 <path d="M463.5 527.5 l3 -9 l6 6z" fill="#f2a33a"/><path d="M466 519.5 l4 4" stroke="#7a58d8" stroke-width="1"/><circle cx="471" cy="517" r="1" fill="#e94"/><circle cx="474" cy="520" r="1" fill="#4af"/><path d="M470 515 l2 -1.5 M473.5 517.5 l1.5 -1" stroke="#e55" stroke-width="0.8"/>
 <path d="M485.5 520 c0 -3 3 -4 5 -3 l3 -1.5 c1 1 1.5 2 1 3 c0.8 1.5 0.5 4.5 -1 6.5 c-2 2.5 -6 2 -7.5 -0.5 z" fill="#f4b400"/><path d="M485 517 l-1 -1 M486.5 515.5 l-0.5 -1.5" stroke="#6ad" stroke-width="0.7"/>
 <circle cx="512" cy="521.8" r="5.8" fill="#f6c342"/><path d="M508.2 519.8 q1 -1.2 2 0 M513.8 519.8 q1 -1.2 2 0" stroke="#5a3a10" stroke-width="0.7" fill="none"/><path d="M508 522.5 h8 q-0.5 3.5 -4 3.5 q-3.5 0 -4 -3.5z" fill="#5a3a10"/><path d="M509 523 h6" stroke="#fff" stroke-width="0.8"/><path d="M505.8 521 q-1 1.5 0 2.5 M518.2 521 q1 1.5 0 2.5" stroke="#5ab0ef" stroke-width="1" fill="none"/>
 <circle cx="534" cy="521.8" r="5.8" fill="#f6c342"/><circle cx="532" cy="519.8" r="0.8" fill="#3a2a10"/><circle cx="536" cy="519.8" r="0.8" fill="#3a2a10"/><ellipse cx="534" cy="524" rx="1.6" ry="1.9" fill="#3a2a10"/>
 <circle cx="555.5" cy="521.8" r="5.8" fill="#f6c342"/><circle cx="553.5" cy="520.3" r="0.7" fill="#3a2a10"/><circle cx="557.5" cy="520.3" r="0.7" fill="#3a2a10"/><path d="M553.3 525 q2.2 -1.8 4.4 0" stroke="#3a2a10" stroke-width="0.8" fill="none"/><path d="M551.5 521.5 l-0.8 2.5" stroke="#5ab0ef" stroke-width="1.2"/>
 <circle cx="577" cy="521.3" r="5.6" fill="#f6c342"/><circle cx="575.3" cy="519.8" r="0.7" fill="#3a2a10"/><circle cx="579" cy="519.3" r="0.7" fill="#3a2a10"/><path d="M575 523.5 h3.5" stroke="#3a2a10" stroke-width="0.7"/><path d="M572.5 527.5 c0.5 -2 2.5 -2.5 4 -2 c1 0.3 1 1.5 0 1.8 l-1.5 0.4" fill="#e8a800"/>
 <path d="M594 522.5 h3 v-6 h-3z" fill="#f4b400"/><path d="M597.5 522.5 l3 5 c1.2 0 1.8 -0.8 1.5 -2 l-0.6 -2.5 h3.5 c1 0 1.5 -0.8 1.3 -1.6 l-1.2 -5 c-0.2 -0.6 -0.7 -0.9 -1.3 -0.9 h-6.2z" fill="#f4b400"/>
</svg>
<!-- controls -->
<div class="a" style="left:361.6px;top:541.3px;width:30px;height:26px;border-radius:7px 0 0 7px;background:#741712"></div>
<div class="a" style="left:382.3px;top:541.3px;width:25.8px;height:26px;border-radius:7px;background:#f9dedc"></div>
<div class="a" style="left:412.5px;top:541.3px;width:30px;height:26px;border-radius:7px 0 0 7px;background:#741712"></div>
<div class="a" style="left:433.9px;top:541.3px;width:25.5px;height:26px;border-radius:7px;background:#f9dedc"></div>
<div class="a" style="left:464px;top:541.3px;width:30px;height:26px;border-radius:13px;background:#333537"></div>
<div class="a" style="left:497.9px;top:541px;width:31.1px;height:26.3px;border-radius:6.5px;background:#a8c7fa"></div>
<div class="a" style="left:533.6px;top:541.3px;width:29.4px;height:26px;border-radius:13px;background:#333537"></div>
<div class="a" style="left:567.7px;top:541.3px;width:29.9px;height:26px;border-radius:13px;background:#333537"></div>
<div class="a" style="left:601.6px;top:541.3px;width:19.4px;height:26px;border-radius:10px;background:#333537"></div>
<div class="a" style="left:625px;top:541.3px;width:39px;height:26px;border-radius:13px;background:#dc362e"></div>
<svg class="a" style="left:355px;top:535px" width="315" height="38" viewBox="355 535 315 38">
 <g fill="none" stroke-linecap="round" stroke-linejoin="round">
  <path d="M370.3 555.5 l2.2 -2.2 l2.2 2.2" stroke="#f2b8b5" stroke-width="1.2"/>
  <path d="M421.2 555.5 l2.2 -2.2 l2.2 2.2" stroke="#f2b8b5" stroke-width="1.2"/>
  <path d="M394.3 549.3 a1.7 1.7 0 0 1 3.4 0 v3.4 a1.7 1.7 0 0 1 -3.4 0z M392.2 552.5 a3.8 3.8 0 0 0 7.6 0 M396 556.3 v1.8" stroke="#7a1e19" stroke-width="1"/>
  <path d="M391.8 548.2 l8.6 9.2" stroke="#7a1e19" stroke-width="1.1"/>
  <path d="M441.5 551.5 v6.6 h7.5 v-2 l3 2.2 v-7 l-3 2.2 v-2 h-4.5" stroke="#7a1e19" stroke-width="1"/>
  <path d="M441 549.5 l10.5 10.5" stroke="#7a1e19" stroke-width="1.1"/>
  <rect x="473.5" y="549" width="11" height="8" stroke="#e3e3e3" stroke-width="1.1"/><path d="M472.5 559.5 h13" stroke="#e3e3e3" stroke-width="1.1"/><path d="M479 555 v-4 M477 552.5 l2 -2 l2 2" stroke="#e3e3e3" stroke-width="1"/>
  <circle cx="513.4" cy="554.2" r="5.5" stroke="#0842a0" stroke-width="1.2"/><path d="M511 556 q2.4 2 4.8 0" stroke="#0842a0" stroke-width="1.1"/>
  <rect x="542.7" y="549.5" width="11" height="9" rx="1" stroke="#e3e3e3" stroke-width="1.1"/><path d="M545 552.5 h2.5 M545 555.5 h2.5 M549.5 552.5 h2.3 M549.5 555.5 h2.3" stroke="#e3e3e3" stroke-width="0.9"/>
  <path d="M578 559.5 c-2 -1 -3.5 -3 -4.5 -5.5 l0.8 -0.8 l2.2 2 v-7.5 a0.9 0.9 0 0 1 1.8 0 v4 v-5.5 a0.9 0.9 0 0 1 1.8 0 v5.5 v-5 a0.9 0.9 0 0 1 1.8 0 v5 v-4 a0.9 0.9 0 0 1 1.8 0 v7 c0 3 -2 5 -4.5 5z" stroke="#e3e3e3" stroke-width="1.1"/>
 </g>
 <circle cx="513.4" cy="554.2" r="0.1" fill="#0842a0"/><circle cx="511.5" cy="552.8" r="0.8" fill="#0842a0"/><circle cx="515.3" cy="552.8" r="0.8" fill="#0842a0"/>
 <circle cx="611.3" cy="550.5" r="1.1" fill="#e3e3e3"/><circle cx="611.3" cy="554.3" r="1.1" fill="#e3e3e3"/><circle cx="611.3" cy="558.1" r="1.1" fill="#e3e3e3"/>
 <path d="M638.5 556.3 c4 -3.5 10 -3.5 14 0 l-1.6 1.7 l-2.6 -1.3 v-1.6 c-1.8 -0.6 -3.8 -0.6 -5.6 0 v1.6 l-2.6 1.3z" fill="#fbe0dc"/>
</svg>
<!-- right icons -->
<svg class="a" style="left:944px;top:544px" width="75" height="20" viewBox="944 544 75 20">
 <circle cx="955.8" cy="553.9" r="4.9" fill="none" stroke="#e3e3e3" stroke-width="1.1"/><path d="M955.8 552.8 v3.6" stroke="#e3e3e3" stroke-width="1.2"/><circle cx="955.8" cy="551" r="0.7" fill="#e3e3e3"/>
 <path d="M976.5 549.3 h10.5 v8.3 h-8.5 l-2 2z" fill="none" stroke="#e3e3e3" stroke-width="1.1"/><path d="M978.5 551.7 h6.5 M978.5 553.7 h6.5 M978.5 555.5 h4" stroke="#e3e3e3" stroke-width="0.9"/>
 <g fill="#e6e6e6"><circle cx="1004" cy="550.8" r="1.1"/><circle cx="1007.4" cy="550.8" r="1.1"/><circle cx="1010.8" cy="550.8" r="1.1"/><circle cx="1004" cy="554.2" r="1.1"/><circle cx="1007.4" cy="554.2" r="1.1"/><circle cx="1010.8" cy="554.2" r="1.1"/><circle cx="1004" cy="557.6" r="1.1"/><circle cx="1007.4" cy="557.6" r="1.1"/><circle cx="1010.8" cy="557.6" r="1.1"/></g>
</svg>
</body></html>
